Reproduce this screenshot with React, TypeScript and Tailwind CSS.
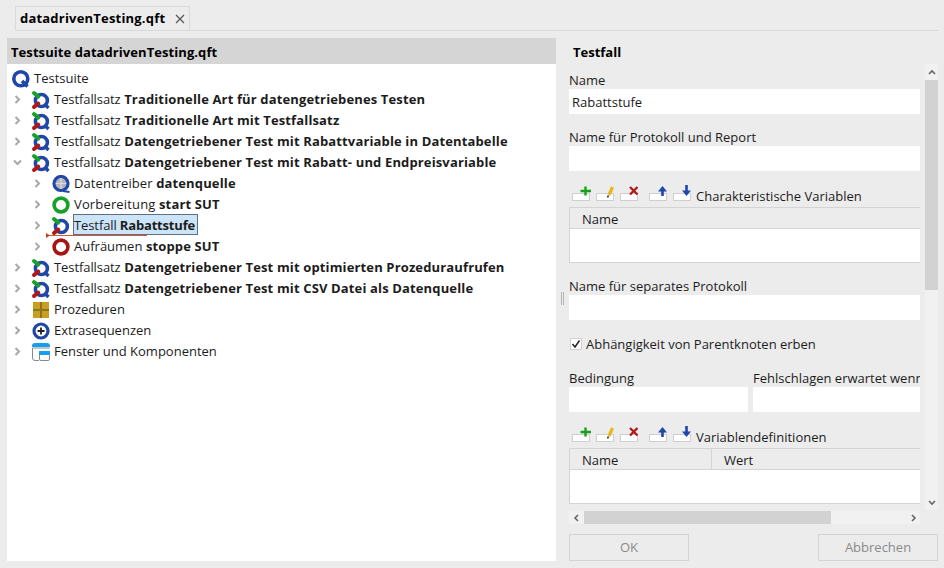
import React from "react";

const Chevron = ({ open }: { open?: boolean }) => (
  <svg width="9" height="9" viewBox="0 0 9 9" className="shrink-0">
    <path d={open ? "M1 2.5 L4.5 6 L8 2.5" : "M2.5 1 L6 4.5 L2.5 8"} fill="none" stroke="#a8a8a8" strokeWidth="2" />
  </svg>
);

const Set = ({ small }: { small?: boolean }) => (
  <svg width="18" height="18" viewBox="1 0 18 18" className="shrink-0 overflow-visible">
    <circle cx="10.4" cy="9.5" r="6" fill="none" stroke="#1f47a8" strokeWidth="3.6" />
    {!small && <path d="M13.5 13 L17.5 17" stroke="#1f47a8" strokeWidth="3.4" />}
    <path d="M3 2 L7.2 5.6" stroke="#18a028" strokeWidth="4" strokeLinecap="round" />
    <path d="M3 16 L7.2 12.6" stroke="#b01818" strokeWidth="4" strokeLinecap="round" />
  </svg>
);

const Q = () => (
  <svg width="18" height="18" viewBox="0 0 18 18" className="shrink-0">
    <circle cx="8.8" cy="8.8" r="7" fill="none" stroke="#1f47a8" strokeWidth="3.6" />
    <path d="M10 11 L15.5 16.5" stroke="#1f47a8" strokeWidth="3.6" />
  </svg>
);

const Driver = () => (
  <svg width="18" height="18" viewBox="0 0 18 18" className="shrink-0">
    <rect x="4" y="3.5" width="10" height="10" fill="#b4b4bc" />
    <path d="M9 3.5 V13.5 M4 8.5 H14" stroke="#dcdce2" strokeWidth="1.2" />
    <circle cx="9" cy="8.5" r="7" fill="none" stroke="#1f47a8" strokeWidth="3.2" />
    <path d="M11 16 L17.5 17" stroke="#1f47a8" strokeWidth="2" />
  </svg>
);

const Ring = ({ color }: { color: string }) => (
  <svg width="18" height="18" viewBox="0 0 18 18" className="shrink-0">
    <circle cx="9" cy="9" r="6.9" fill="none" stroke={color} strokeWidth="3.6" />
  </svg>
);

const Proc = () => (
  <svg width="16" height="16" viewBox="0 0 16 16" className="shrink-0">
    <rect width="16" height="16" fill="#c99f22" />
    <path d="M8 0 V16 M0 8 H16" stroke="#8f7420" strokeWidth="2" />
  </svg>
);

const Extra = () => (
  <svg width="18" height="18" viewBox="0 0 18 18" className="shrink-0">
    <circle cx="9" cy="9" r="7" fill="#fff" stroke="#1f47a8" strokeWidth="3.2" />
    <path d="M5.5 9 H12.5 M9 5.5 V12.5" stroke="#222" strokeWidth="1.8" />
  </svg>
);

const Win = () => (
  <svg width="18" height="18" viewBox="0 0 18 18" className="shrink-0">
    <path d="M0.5 5 V15 Q0.5 17.5 3 17.5 H7 M0.5 5 H17.5" fill="none" stroke="#8a8a8a" />
    <path d="M0 3 Q0 0 3 0 H15 Q18 0 18 3 V4 H0 Z" fill="#14a0ee" />
    <rect x="7.5" y="8.5" width="10" height="9" rx="1.5" fill="#fff" stroke="#8a8a8a" />
    <path d="M7 8 H18 V12 H7 Z" fill="#14a0ee" />
  </svg>
);

const plainTracking = (plain: string) =>
  plain === "Testfallsatz" ? "tracking-[-0.08px]" : plain === "Vorbereitung" ? "tracking-[0.15px]" : plain === "Datentreiber" ? "tracking-[0.08px]" : plain === "Testfall" ? "tracking-[-0.1px]" : "";

const Row = ({ indent = 0, open, none, icon, plain, bold, sel }: { indent?: number; open?: boolean; none?: boolean; icon: React.ReactNode; plain: string; bold?: string; sel?: boolean }) => (
  <div className={`flex items-center h-[21px] whitespace-nowrap ${indent === 2 ? "pl-[26px]" : none ? "pl-[4px]" : "pl-[6px]"}`}>
    {!none && <span className="w-[18px] flex shrink-0"><Chevron open={open} /></span>}
    <span className="flex justify-center shrink-0 w-[20px] mr-[3px]">{icon}</span>
    <span className={sel ? "bg-[#cce4f7] border border-[#5f6f80] h-[21px] leading-[20px] relative -top-[1px] -ml-[1px] pr-[2px]" : ""}>
      <span className={plainTracking(plain)}>{plain}</span>
      {bold && <b className={`font-bold ${sel ? "tracking-[-0.18px]" : "tracking-[0.14px]"}`}> {bold}</b>}
    </span>
  </div>
);

const ToolButton = ({ children }: { children: React.ReactNode }) => (
  <svg width="20" height="18" viewBox="0 0 20 18" className="shrink-0">
    <rect x="0.5" y="8.5" width="17" height="7" fill="#fff" stroke="#cfcfcf" />
    {children}
  </svg>
);

const Toolbar = ({ label }: { label: string }) => (
  <div className="flex items-end h-[18px] pl-[3px]">
    <span className="mr-[4px]"><ToolButton><path d="M13.5 1.5 V10.5 M8.5 6 H19" stroke="#18a018" strokeWidth="2.4" /></ToolButton></span>
    <span className="mr-[4px]"><ToolButton><path d="M16.5 2 L13 10" stroke="#e8b820" strokeWidth="3.2" /><path d="M12.4 10.5 L11.6 12.5" stroke="#222" strokeWidth="1.5" /></ToolButton></span>
    <span className="mr-[9px]"><ToolButton><path d="M10 2 L17.5 9.5 M17.5 2 L10 9.5" stroke="#b01818" strokeWidth="2.3" /></ToolButton></span>
    <span className="mr-[4px]"><ToolButton><path d="M13.5 11 V5" stroke="#1f47a8" strokeWidth="2.6" /><path d="M9 6.5 L13.5 1 L18 6.5 Z" fill="#1f47a8" /></ToolButton></span>
    <span className="mr-[3px]"><ToolButton><path d="M13.5 0 V6" stroke="#1f47a8" strokeWidth="2.6" /><path d="M9 5.5 L18 5.5 L13.5 11 Z" fill="#1f47a8" /></ToolButton></span>
    <span className="leading-[18px] relative top-[2px]">{label}</span>
  </div>
);

const Label = ({ children, className = "" }: { children: React.ReactNode; className?: string }) => (
  <div className={`h-[18px] leading-[18px] whitespace-nowrap overflow-hidden ${className}`}>{children}</div>
);

const Field = ({ value = "" }: { value?: string }) => (
  <div className="h-[25px] bg-white leading-[27px] px-[3px]">{value}</div>
);

const tree = [
  { icon: <Set />, plain: "Testfallsatz", bold: "Traditionelle Art für datengetriebenes Testen" },
  { icon: <Set />, plain: "Testfallsatz", bold: "Traditionelle Art mit Testfallsatz" },
  { icon: <Set />, plain: "Testfallsatz", bold: "Datengetriebener Test mit Rabattvariable in Datentabelle" },
  { open: true, icon: <Set />, plain: "Testfallsatz", bold: "Datengetriebener Test mit Rabatt- und Endpreisvariable" },
];

export default function App() {
  return (
    <div className="w-[944px] h-[568px] overflow-hidden bg-[#ececec] text-[#1c1c1c] text-[13px] font-['Open_Sans',sans-serif] flex flex-col">
      <div className="h-[31px] shrink-0 pl-[15px] pt-[6px] pr-[6px]">
        <div className="h-[25px] border-b border-[#d9d9d9]">
          <div className="w-[175px] h-[25px] border border-b-0 border-[#d9d9d9] flex items-center pl-[4px] font-bold tracking-[0.2px] text-black">
            datadrivenTesting.qft
            <svg width="10" height="10" viewBox="0 0 10 10" className="ml-[10px]"><path d="M1 1 L9 9 M9 1 L1 9" stroke="#555" strokeWidth="1.2" /></svg>
          </div>
        </div>
      </div>
      <div className="flex flex-1 min-h-0 pl-[7px] pt-[7px] pb-[7px] pr-[6px]">
        <div className="w-[549px] shrink-0 bg-white flex flex-col relative">
          <div className="h-[26px] shrink-0 bg-[#d5d5d5] pl-[4px] leading-[28px] font-bold tracking-[0.07px] text-black">Testsuite datadrivenTesting.qft</div>
          <div className="pt-[4px] pr-[4px]">
            <Row none icon={<Q />} plain="Testsuite" />
            {tree.map((t) => <Row key={t.bold} {...t} />)}
            <Row indent={2} icon={<Driver />} plain="Datentreiber" bold="datenquelle" />
            <Row indent={2} icon={<Ring color="#18a028" />} plain="Vorbereitung" bold="start SUT" />
            <Row indent={2} icon={<Set small />} plain="Testfall" bold="Rabattstufe" sel />
            <Row indent={2} icon={<Ring color="#a81414" />} plain="Aufräumen" bold="stoppe SUT" />
            <Row icon={<Set />} plain="Testfallsatz" bold="Datengetriebener Test mit optimierten Prozeduraufrufen" />
            <Row icon={<Set />} plain="Testfallsatz" bold="Datengetriebener Test mit CSV Datei als Datenquelle" />
            <Row icon={<Proc />} plain="Prozeduren" />
            <Row icon={<Extra />} plain="Extrasequenzen" />
            <Row icon={<Win />} plain="Fenster und Komponenten" />
          </div>
          <svg width="101" height="7" viewBox="0 0 101 7" className="absolute left-[39px] top-[194px]">
            <path d="M3 3.5 H101" stroke="#d05a30" strokeWidth="1" />
            <path d="M0 1 L4 3.5 L0 6 Z" fill="#c04820" />
          </svg>
        </div>
        <div className="w-[13px] shrink-0 flex items-center justify-center">
          <div className="w-[3px] h-[13px] border-x border-[#b5b5b5] relative top-[-1px]" />
        </div>
        <div className="flex-1 min-w-0 flex flex-col">
          <div className="h-[26px] shrink-0 pl-[4px] leading-[28px] font-bold text-black">Testfall</div>
          <div className="flex flex-1 min-h-0">
            <div className="w-[351px] shrink-0 overflow-hidden flex flex-col">
              <Label className="mt-[7px]">Name</Label>
              <Field value="Rabattstufe" />
              <Label className="mt-[14px]">Name für Protokoll und Report</Label>
              <Field />
              <div className="mt-[14px]"><Toolbar label="Charakteristische Variablen" /></div>
              <div className="mt-[4px] h-[56px] border-t border-l border-b border-[#d4d4d4] flex flex-col">
                <div className="h-[20px] shrink-0 pl-[12px] leading-[22px]">Name</div>
                <div className="flex-1 bg-white border-t border-[#d4d4d4]" />
              </div>
              <Label className="mt-[14px]">Name für separates Protokoll</Label>
              <Field />
              <label className="mt-[15px] h-[18px] leading-[20px] flex items-center gap-[4px] pl-[1px]">
                <span className="w-[12px] h-[12px] bg-white border border-[#d0d0d0] flex items-center justify-center">
                  <svg width="10" height="10" viewBox="0 0 10 10"><path d="M1.5 5 L4 8 L8.5 1.5" fill="none" stroke="#222" strokeWidth="1.5" /></svg>
                </span>
                Abhängigkeit von Parentknoten erben
              </label>
              <div className="mt-[16px] flex gap-[5px]">
                <div className="w-[179px] shrink-0"><Label>Bedingung</Label><Field /></div>
                <div className="flex-1 min-w-0"><Label>Fehlschlagen erwartet wenn</Label><Field /></div>
              </div>
              <div className="mt-[14px]"><Toolbar label="Variablendefinitionen" /></div>
              <div className="mt-[4px] h-[56px] border-t border-l border-b border-[#d4d4d4] flex flex-col">
                <div className="h-[20px] shrink-0 flex leading-[22px]">
                  <div className="w-[142px] shrink-0 pl-[12px] border-r border-[#d4d4d4]">Name</div>
                  <div className="pl-[12px]">Wert</div>
                </div>
                <div className="flex-1 bg-white border-t border-[#d4d4d4]" />
              </div>
              <div className="mt-[7px] h-[13px] bg-[#f1f1f1] flex items-center">
                <div className="w-[15px] flex justify-center"><svg width="7" height="8" viewBox="0 0 7 8"><path d="M5 1 L2 4 L5 7" fill="none" stroke="#666" strokeWidth="1.6" /></svg></div>
                <div className="w-[247px] h-full bg-[#d2d2d2]" />
                <div className="flex-1 flex justify-end pr-[3px]"><svg width="7" height="8" viewBox="0 0 7 8"><path d="M2 1 L5 4 L2 7" fill="none" stroke="#666" strokeWidth="1.6" /></svg></div>
              </div>
            </div>
            <div className="ml-[5px] w-[13px] shrink-0 bg-[#f1f1f1] flex flex-col h-[446px]">
              <div className="h-[16px] flex items-center justify-center"><svg width="8" height="7" viewBox="0 0 8 7"><path d="M1 5 L4 2 L7 5" fill="none" stroke="#666" strokeWidth="1.6" /></svg></div>
              <div className="h-[210px] bg-[#d2d2d2]" />
              <div className="flex-1 flex items-end justify-center pb-[4px]"><svg width="8" height="7" viewBox="0 0 8 7"><path d="M1 2 L4 5 L7 2" fill="none" stroke="#666" strokeWidth="1.6" /></svg></div>
            </div>
          </div>
          <div className="h-[27px] shrink-0 flex justify-between mt-[10px]">
            <div className="w-[120px] border border-[#d4d4d4] flex items-center justify-center text-[#8a8a8a]">OK</div>
            <div className="w-[120px] border border-[#d4d4d4] flex items-center justify-center text-[#8a8a8a]">Abbrechen</div>
          </div>
        </div>
      </div>
    </div>
  );
}
